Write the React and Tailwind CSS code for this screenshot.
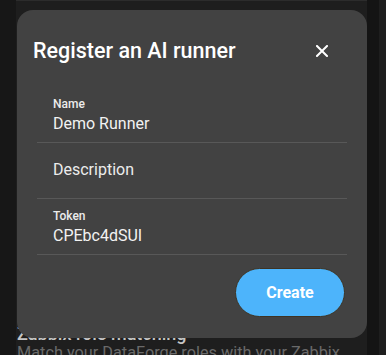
import React from "react";

function Field({ label, value, placeholder }) {
  if (placeholder) {
    return (
      <div className="h-[56px] border-b border-[#585858] px-4 pt-[15px]">
        <div className="text-[16px] leading-[24px] text-[#ececec]">{placeholder}</div>
      </div>
    );
  }
  return (
    <div className="h-[56px] border-b border-[#585858] px-4 pt-[9px]">
      <div className="text-[12px] leading-[16px] font-medium text-[#ececec]">{label}</div>
      <div className="text-[16px] leading-[24px] text-[#f2f2f2]">{value}</div>
    </div>
  );
}

export default function App() {
  return (
    <div
      className="relative w-[386px] h-[355px] overflow-hidden bg-[#171717]"
      style={{ fontFamily: "Roboto, 'Noto Sans', sans-serif" }}
    >
      <div className="flex h-full">
        <div className="w-[16px] bg-[#171717]" />
        <div className="w-[351px] bg-[#1e1e1e] flex flex-col">
          <div className="h-[7px] bg-[#222222] border-b border-[#2c2c2c]" />
          <div className="pt-[322px] pl-[1px]">
            <div className="text-[18px] leading-[22px] font-medium text-[#c4c4c4] whitespace-nowrap">
              Zabbix role matching
            </div>
            <div className="text-[16.3px] leading-[16px] text-[#6a6a6a] whitespace-nowrap">
              Match your DataForge roles with your Zabbix
            </div>
          </div>
        </div>
        <div className="w-[12px] bg-[#141414]" />
        <div className="flex-1 bg-[#1e1e1e]" />
      </div>

      <div className="absolute left-[17px] top-[10px] w-[350px] h-[328px] rounded-[16px] bg-[#424242] pt-[27px] flex flex-col">
        <div className="flex items-center justify-between pl-4 pr-[33px]">
          <h2 className="text-[21.5px] leading-[28px] font-medium text-white">Register an AI runner</h2>
          <button className="w-[24px] h-[24px] flex items-center justify-center">
            <svg width="12" height="12" viewBox="0 0 12 12">
              <path d="M1 1 L11 11 M11 1 L1 11" stroke="#ffffff" strokeWidth="2" strokeLinecap="square" />
            </svg>
          </button>
        </div>
        <div className="mt-[22px] mx-[20px]">
          <Field label="Name" value="Demo Runner" />
          <Field placeholder="Description" />
          <Field label="Token" value="CPEbc4dSUI" />
        </div>
        <div className="flex justify-end pr-[22px] mt-[13px]">
          <button className="w-[110px] h-[49px] rounded-full bg-[#4db4fb] border border-[#3e3424] text-white text-[16px] font-bold">
            Create
          </button>
        </div>
      </div>
    </div>
  );
}
